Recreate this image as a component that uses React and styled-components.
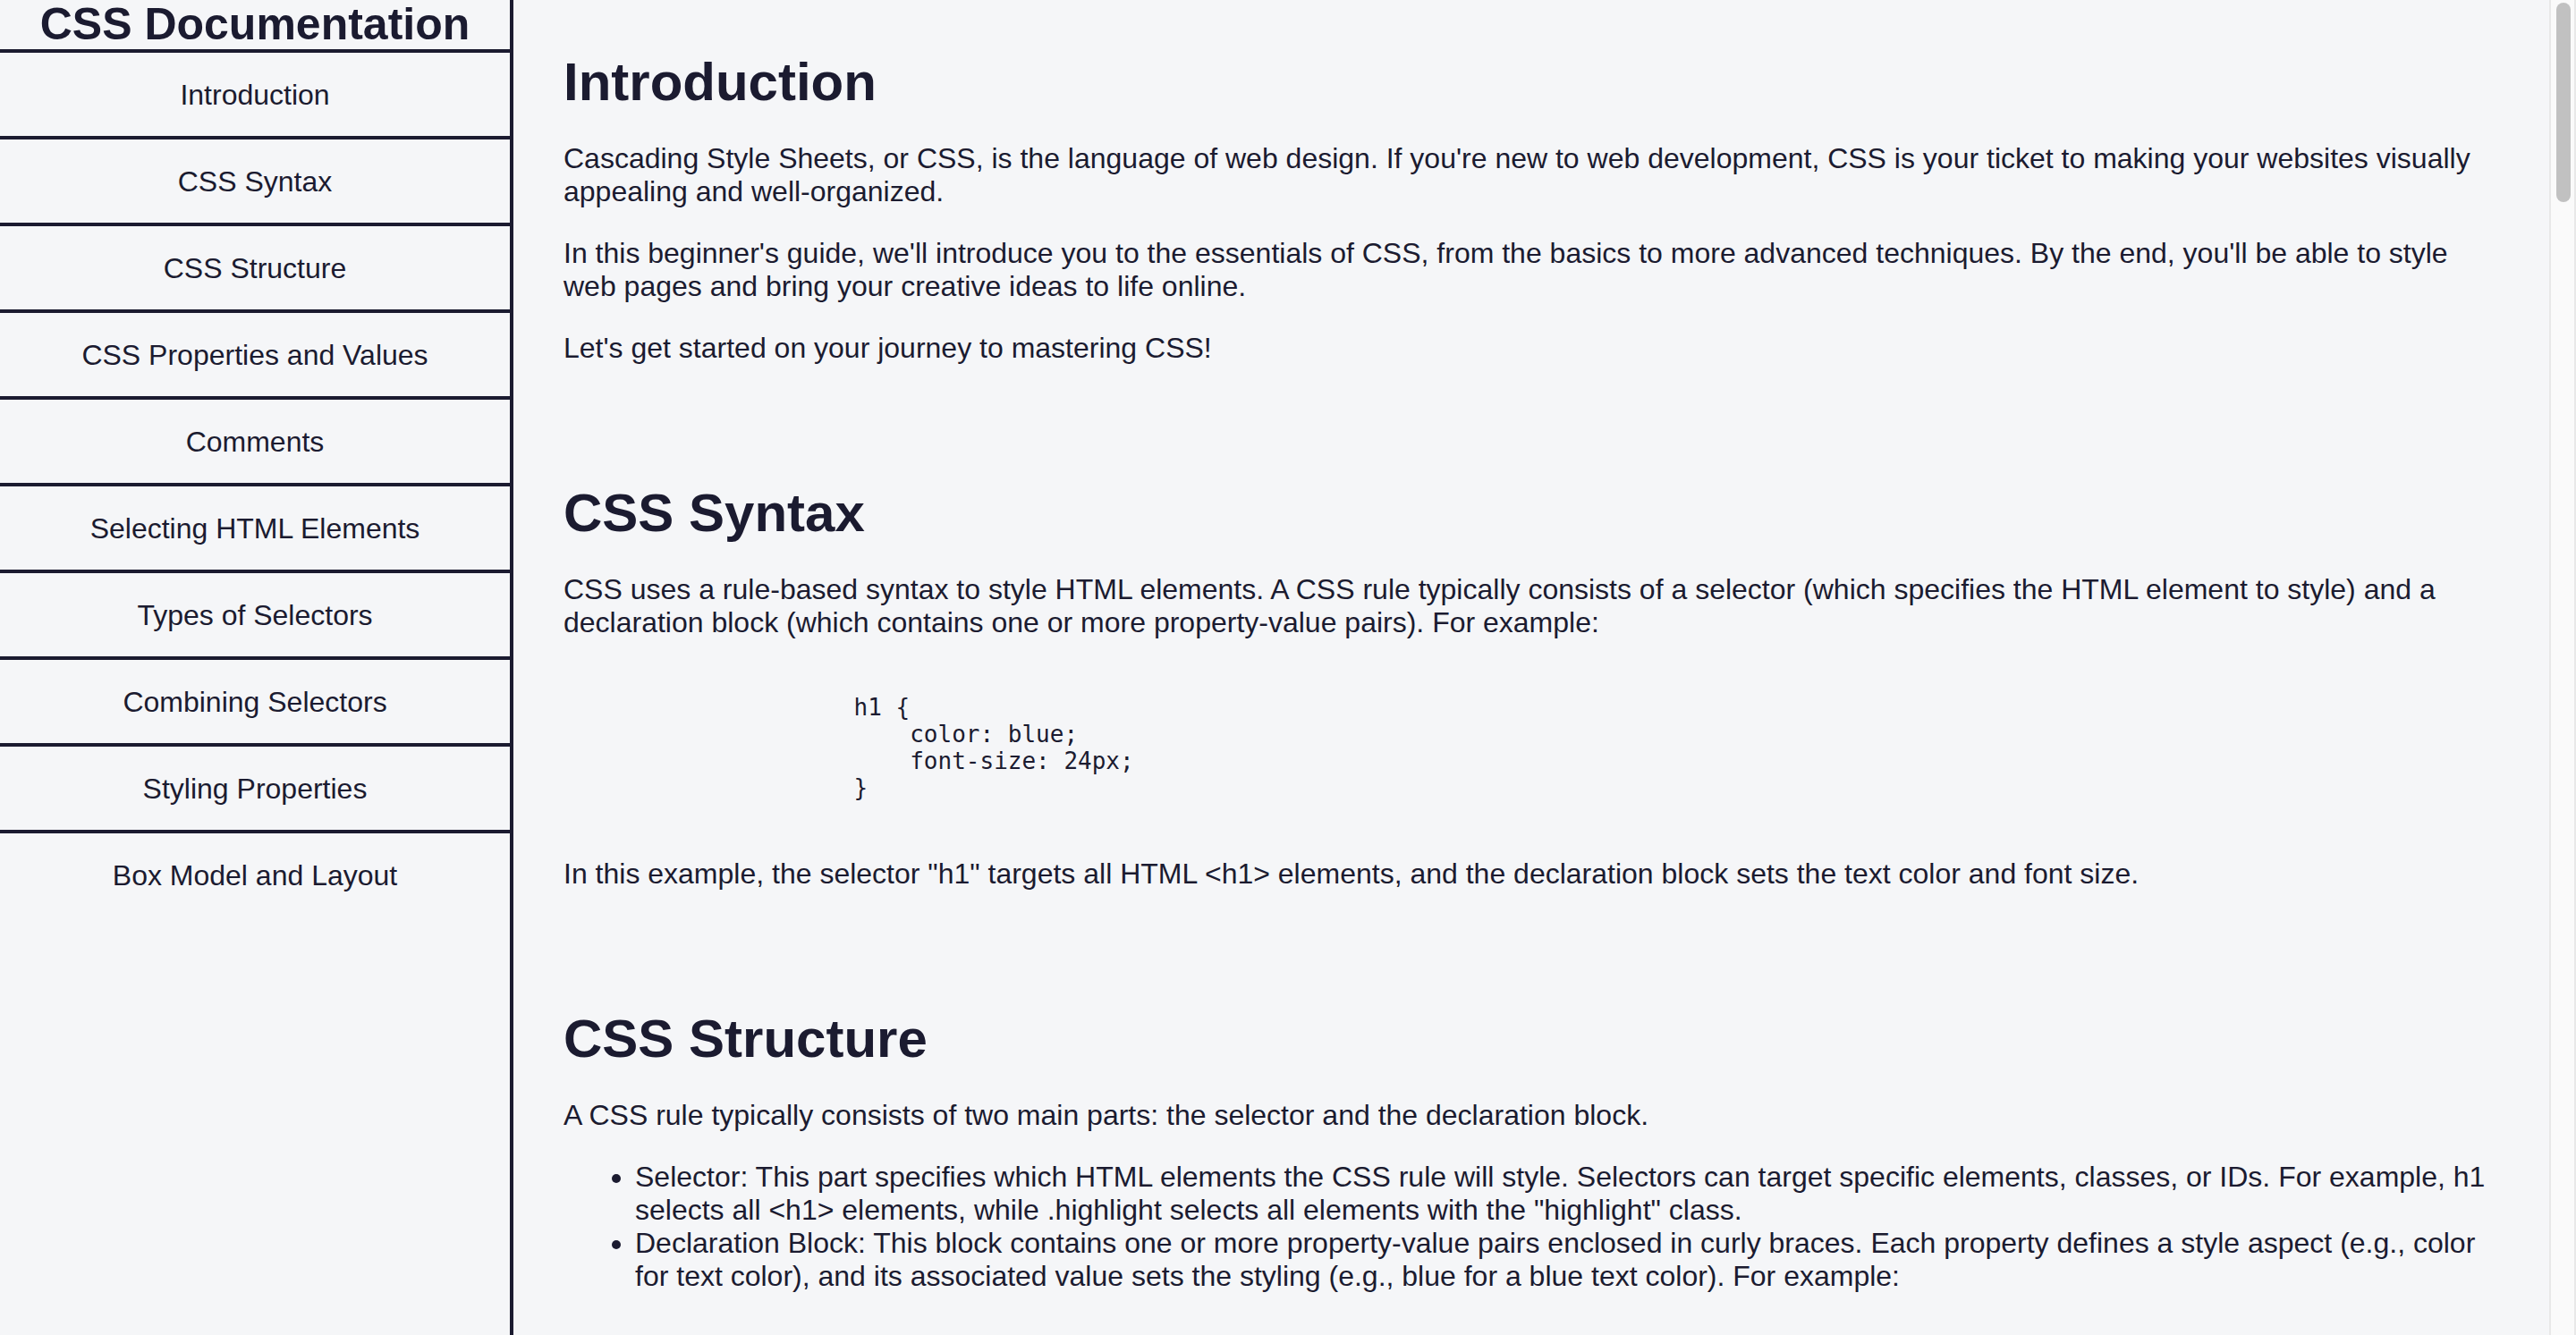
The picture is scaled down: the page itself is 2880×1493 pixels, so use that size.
import React from "react";
import styled, { createGlobalStyle } from "styled-components";

const GlobalStyle = createGlobalStyle`
  * {
    box-sizing: border-box;
  }
  body {
    margin: 0;
    background: #f5f6f8;
    color: #1b1b30;
    font-family: "Liberation Sans", Helvetica, Arial, sans-serif;
    font-size: 32px;
    line-height: 37px;
  }
`;

const Window = styled.div`
  display: grid;
  grid-template-columns: minmax(0, 1fr) 30px;
  min-height: 100vh;
`;

const Page = styled.div`
  display: flex;
`;

const Sidebar = styled.nav`
  box-sizing: content-box;
  flex: 0 0 20%;
  border-right: 4px solid #1b1b30;
  text-align: center;
`;

const SidebarTitle = styled.header`
  font-size: 50px;
  font-weight: bold;
  line-height: 55px;
`;

const NavLink = styled.a`
  display: block;
  padding: 29px 0 27px;
  border-top: 4px solid #1b1b30;
  color: inherit;
  text-decoration: none;
`;

const Main = styled.main`
  flex: 1;
  min-width: 0;
  padding: 57px 56px 0;
`;

const Section = styled.section`
  & + & {
    margin-top: 131px;
  }
`;

const Heading = styled.h1`
  margin: 0;
  font-size: 60px;
  line-height: 70px;
`;

const Paragraph = styled.p`
  margin: 32px 0 0;
`;

const Code = styled.pre`
  margin: 61px 0 63px 15%;
  font-family: "DejaVu Sans Mono", Menlo, monospace;
  font-size: 26px;
  line-height: 30px;

  & + ${Paragraph} {
    margin-top: 0;
  }
`;

const List = styled.ul`
  margin: 32px 0 0;
  padding-left: 80px;
`;

const ScrollTrack = styled.div`
  display: flex;
  justify-content: center;
  align-items: flex-start;
  padding: 3px 0 0 2px;
  background: #fafafa;
  border: solid #e8e8e8;
  border-width: 0 2px;
`;

const ScrollThumb = styled.div`
  width: 16px;
  height: 223px;
  border-radius: 8px;
  background: #c1c1c1;
`;

const topics = [
  "Introduction",
  "CSS Syntax",
  "CSS Structure",
  "CSS Properties and Values",
  "Comments",
  "Selecting HTML Elements",
  "Types of Selectors",
  "Combining Selectors",
  "Styling Properties",
  "Box Model and Layout",
];

const idFor = (title) => title.replaceAll(" ", "_");

function Topic({ title, children }) {
  return (
    <Section id={idFor(title)}>
      <Heading>{title}</Heading>
      {children}
    </Section>
  );
}

export default function App() {
  return (
    <Window>
      <GlobalStyle />
      <Page>
        <Sidebar>
          <SidebarTitle>CSS Documentation</SidebarTitle>
          {topics.map((topic) => (
            <NavLink key={topic} href={`#${idFor(topic)}`}>
              {topic}
            </NavLink>
          ))}
        </Sidebar>
        <Main>
          <Topic title="Introduction">
            <Paragraph>
              Cascading Style Sheets, or CSS, is the language of web design. If
              you're new to web development, CSS is your ticket to making your
              websites visually appealing and well-organized.
            </Paragraph>
            <Paragraph>
              In this beginner's guide, we'll introduce you to the essentials of
              CSS, from the basics to more advanced techniques. By the end,
              you'll be able to style web pages and bring your creative ideas to
              life online.
            </Paragraph>
            <Paragraph>
              Let's get started on your journey to mastering CSS!
            </Paragraph>
          </Topic>
          <Topic title="CSS Syntax">
            <Paragraph>
              CSS uses a rule-based syntax to style HTML elements. A CSS rule
              typically consists of a selector (which specifies the HTML element
              to style) and a declaration block (which contains one or more
              property-value pairs). For example:
            </Paragraph>
            <Code>
              <code>{`h1 {\n    color: blue;\n    font-size: 24px;\n}`}</code>
            </Code>
            <Paragraph>
              In this example, the selector "h1" targets all HTML &lt;h1&gt;
              elements, and the declaration block sets the text color and font
              size.
            </Paragraph>
          </Topic>
          <Topic title="CSS Structure">
            <Paragraph>
              A CSS rule typically consists of two main parts: the selector and
              the declaration block.
            </Paragraph>
            <List>
              <li>
                Selector: This part specifies which HTML elements the CSS rule
                will style. Selectors can target specific elements, classes, or
                IDs. For example, h1 selects all &lt;h1&gt; elements, while
                .highlight selects all elements with the "highlight" class.
              </li>
              <li>
                Declaration Block: This block contains one or more
                property-value pairs enclosed in curly braces. Each property
                defines a style aspect (e.g., color for text color), and its
                associated value sets the styling (e.g., blue for a blue text
                color). For example:
              </li>
            </List>
          </Topic>
        </Main>
      </Page>
      <ScrollTrack aria-hidden="true">
        <ScrollThumb />
      </ScrollTrack>
    </Window>
  );
}
